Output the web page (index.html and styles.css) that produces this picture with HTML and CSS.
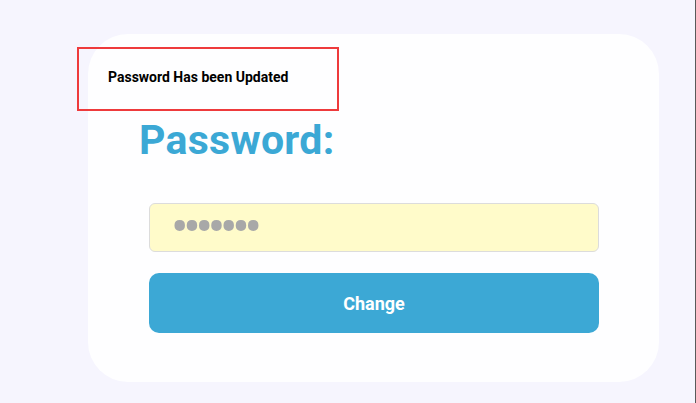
FILE: index.html
```html
<!DOCTYPE html>
<html>
<head>
<meta charset="utf-8">
<link rel="stylesheet" href="styles.css">
</head>
<body>
<div class="page">
  <div class="card">
    <h1 class="title">Password:</h1>
    <form class="form">
      <input class="field" type="password" value="1234567">
      <button class="btn" type="button">Change</button>
    </form>
  </div>
  <div class="toast">Password Has been Updated</div>
</div>
</body>
</html>
```
FILE: styles.css
```css
html, body {
  margin: 0;
  padding: 0;
  height: 100%;
}
body {
  background: #f6f5fe;
  font-family: Roboto, "Liberation Sans", sans-serif;
  box-sizing: border-box;
  border-right: 1px solid #5a5a5a;
  overflow: hidden;
}
.page {
  position: relative;
  padding: 34px 0 0 88px;
}
.card {
  width: 571px;
  height: 348px;
  box-sizing: border-box;
  background: #fefeff;
  border-radius: 40px;
  padding: 81px 60px 0 61px;
}
.title {
  margin: 0 0 0 -10px;
  font-size: 41px;
  line-height: 50px;
  font-weight: 700;
  letter-spacing: 0.3px;
  color: #3ba8d5;
}
.form {
  display: flex;
  flex-direction: column;
  gap: 21px;
  margin-top: 38px;
}
.field {
  height: 49px;
  box-sizing: border-box;
  background: #fffbca;
  border: 1px solid #dcdcdc;
  border-radius: 6px;
  padding: 0 21px;
  font-family: Roboto, sans-serif;
  font-size: 52px;
  color: #a8a8a8;
  outline: none;
  letter-spacing: -5.3px;
}
.btn {
  height: 60px;
  border: none;
  border-radius: 10px;
  background: #3ca8d5;
  color: #ffffff;
  font-family: Roboto, sans-serif;
  font-weight: 700;
  font-size: 18px;
}
.toast {
  position: absolute;
  left: 77px;
  top: 47px;
  width: 262px;
  height: 64px;
  box-sizing: border-box;
  border: 2px solid #ee3a3c;
  padding: 20px 0 0 29px;
  font-size: 14px;
  font-weight: 700;
  color: #000;
}
```
